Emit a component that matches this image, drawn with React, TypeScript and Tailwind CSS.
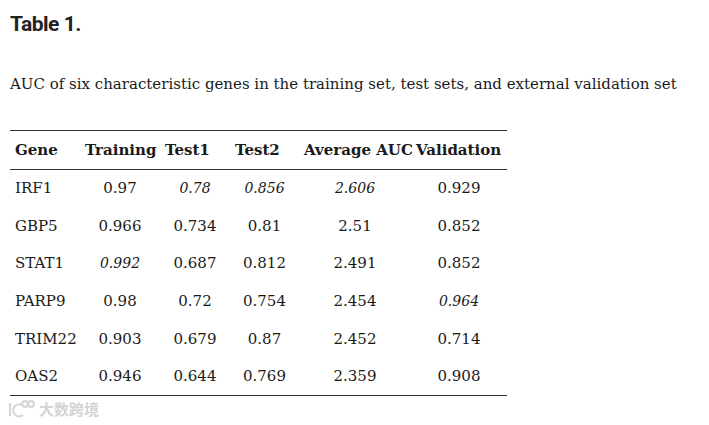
const rows: { gene: string; vals: { v: string; i?: boolean }[] }[] = [
  { gene: "IRF1", vals: [{ v: "0.97" }, { v: "0.78", i: true }, { v: "0.856", i: true }, { v: "2.606", i: true }, { v: "0.929" }] },
  { gene: "GBP5", vals: [{ v: "0.966" }, { v: "0.734" }, { v: "0.81" }, { v: "2.51" }, { v: "0.852" }] },
  { gene: "STAT1", vals: [{ v: "0.992", i: true }, { v: "0.687" }, { v: "0.812" }, { v: "2.491" }, { v: "0.852" }] },
  { gene: "PARP9", vals: [{ v: "0.98" }, { v: "0.72" }, { v: "0.754" }, { v: "2.454" }, { v: "0.964", i: true }] },
  { gene: "TRIM22", vals: [{ v: "0.903" }, { v: "0.679" }, { v: "0.87" }, { v: "2.452" }, { v: "0.714" }] },
  { gene: "OAS2", vals: [{ v: "0.946" }, { v: "0.644" }, { v: "0.769" }, { v: "2.359" }, { v: "0.908" }] },
]

const headers = ["Training", "Test1", "Test2", "Average AUC", "Validation"]
const widths = ["w-[70px]", "w-[80px]", "w-[70px]", "w-[69px]", "w-[112px]", "w-[96px]"]

export default function App() {
  return (
    <div className="w-[709px] h-[425px] bg-white text-[#1a1a1a] relative overflow-hidden">
      <div className="pl-[10px] pt-[10px]">
        <h1 className="text-[21px] font-bold leading-[28px] tracking-[-0.5px] text-[#222]" style={{ fontFamily: 'Roboto, "DejaVu Sans", sans-serif' }}>
          Table 1.
        </h1>
        <p className="mt-[35px] text-[15px] leading-[22px]" style={{ fontFamily: '"DejaVu Serif", serif' }}>
          AUC of six characteristic genes in the training set, test sets, and external validation set
        </p>
        <table className="mt-[35px] w-[497px] table-fixed border-collapse text-[15px]" style={{ fontFamily: '"DejaVu Serif", serif' }}>
          <colgroup>
            {widths.map((w, i) => (
              <col key={i} className={w} />
            ))}
          </colgroup>
          <thead>
            <tr className="h-[39px] border-t border-b border-[#333]">
              <th className="text-left font-bold pl-[5px]">Gene</th>
              {headers.map((h) => (
                <th key={h} className="text-left font-bold whitespace-nowrap pl-[5px]">
                  {h}
                </th>
              ))}
            </tr>
          </thead>
          <tbody className="border-b border-[#333]">
            {rows.map((r) => (
              <tr key={r.gene} className="h-[37.7px]">
                <td className="pl-[5px]">{r.gene}</td>
                {r.vals.map((c, j) => (
                  <td key={j} className={"text-center " + (c.i ? "italic text-[14px]" : "")}>
                    {c.v}
                  </td>
                ))}
              </tr>
            ))}
          </tbody>
        </table>
      </div>
      <div className="absolute left-[7px] top-[399px] flex items-center gap-[4px]">
        <svg width="28" height="20" viewBox="0 0 28 20" fill="none" stroke="#d6d6d6" strokeWidth="2.2">
          <path d="M3 4 v13" />
          <path d="M15 6 a6 6 0 1 0 1 10" />
          <circle cx="18" cy="5" r="2.8" />
          <circle cx="24" cy="5" r="2.8" />
        </svg>
        <span className="text-[15px] font-bold leading-[20px] text-[#d4d4d4]" style={{ fontFamily: '"Noto Sans CJK SC", sans-serif' }}>
          大数跨境
        </span>
      </div>
    </div>
  )
}
